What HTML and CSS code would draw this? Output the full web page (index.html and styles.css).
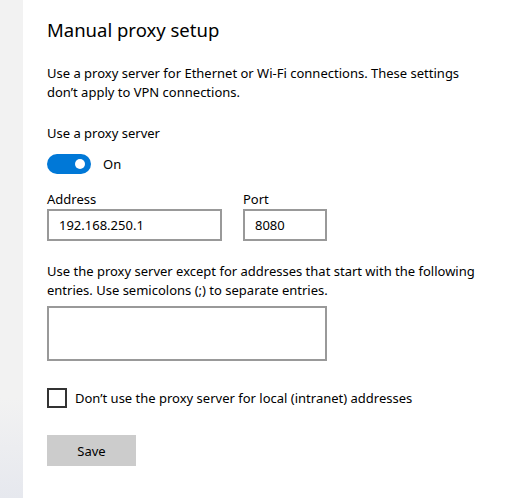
FILE: index.html
```html
<!DOCTYPE html>
<html>
<head>
<meta charset="utf-8">
<link rel="stylesheet" href="styles.css">
</head>
<body>
<div class="app">
  <div class="sidebar"></div>
  <main class="main">
    <h1 class="title">Manual proxy setup</h1>
    <p class="desc">Use a proxy server for Ethernet or Wi-Fi connections. These settings don’t apply to VPN connections.</p>
    <div class="label">Use a proxy server</div>
    <div class="toggle-row">
      <span class="toggle"><span class="knob"></span></span>
      <span class="toggle-text">On</span>
    </div>
    <div class="fields">
      <div class="field">
        <div class="field-label">Address</div>
        <div class="input addr">192.168.250.1</div>
      </div>
      <div class="field">
        <div class="field-label">Port</div>
        <div class="input port">8080</div>
      </div>
    </div>
    <p class="desc2">Use the proxy server except for addresses that start with the following entries. Use semicolons (;) to separate entries.</p>
    <div class="textarea"></div>
    <div class="check-row">
      <span class="checkbox"></span>
      <span class="check-text">Don’t use the proxy server for local (intranet) addresses</span>
    </div>
    <button class="save">Save</button>
  </main>
</div>
</body>
</html>
```
FILE: styles.css
```css
html, body {
  margin: 0;
  padding: 0;
  background: #ffffff;
}
body {
  font-family: "Noto Sans", "Open Sans", sans-serif;
  font-size: 13px;
  color: #000;
}
.app {
  display: flex;
  width: 531px;
  height: 498px;
  overflow: hidden;
}
.sidebar {
  width: 23px;
  flex: none;
  background: linear-gradient(to bottom, #f2f2f2 0%, #f2f2f2 80%, #e6e8ee 100%);
}
.main {
  flex: 1;
  padding: 16px 0 0 24px;
}
.title {
  margin: 0;
  font-size: 18.5px;
  font-weight: 400;
  line-height: 28px;
}
.desc {
  margin: 20px 0 0;
  line-height: 19px;
  width: 436px;
}
.label {
  margin-top: 22px;
  line-height: 19px;
}
.toggle-row {
  display: flex;
  align-items: center;
  margin-top: 11px;
  height: 20px;
}
.toggle {
  width: 44px;
  height: 20px;
  border-radius: 10px;
  background: #0078d7;
  position: relative;
  flex: none;
}
.knob {
  position: absolute;
  width: 10px;
  height: 10px;
  border-radius: 50%;
  background: #fff;
  top: 5px;
  right: 6px;
}
.toggle-text {
  margin-left: 12px;
}
.fields {
  display: flex;
  gap: 21px;
  margin-top: 16px;
}
.field-label {
  line-height: 19px;
}
.input {
  box-sizing: border-box;
  height: 32px;
  border: 2px solid #999;
  padding: 0 10px;
  line-height: 28px;
}
.addr { width: 175px; }
.port { width: 84px; }
.desc2 {
  margin: 21px 0 0;
  line-height: 19px;
  width: 436px;
}
.textarea {
  box-sizing: border-box;
  width: 280px;
  height: 55px;
  border: 2px solid #999;
  margin-top: 6px;
}
.check-row {
  display: flex;
  align-items: center;
  margin-top: 27px;
}
.checkbox {
  box-sizing: border-box;
  width: 20px;
  height: 20px;
  border: 2px solid #333;
  flex: none;
}
.check-text {
  margin-left: 8px;
}
.save {
  display: block;
  margin-top: 27px;
  width: 89px;
  height: 31px;
  border: none;
  background: #ccc;
  font: inherit;
  color: #000;
  padding: 0;
}
```
